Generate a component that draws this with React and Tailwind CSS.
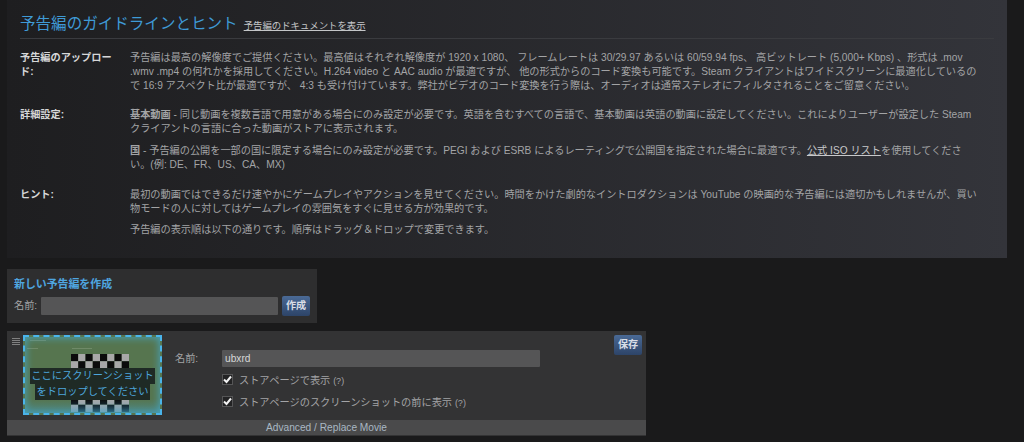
const rows = 8;
const cols = 8;

function Checker() {
  const cells = [];
  for (let r = 0; r < rows; r++) {
    for (let c = 0; c < cols; c++) {
      cells.push(
        <rect
          key={r + "-" + c}
          x={c * 7.3}
          y={r * 7.3}
          width="7.3"
          height="7.3"
          fill={(r + c) % 2 === 0 ? "#0b0b0b" : "#a8a8a8"}
        />
      );
    }
  }
  return (
    <svg width="58" height="58" viewBox="0 0 58.4 58.4" className="block">
      {cells}
    </svg>
  );
}

function Row({ label, children }) {
  return (
    <div className="flex">
      <div className="w-[110px] shrink-0 pr-[10px] font-bold text-[#d6d7d8]">{label}</div>
      <div className="flex-1 text-[#a3a4a6]">{children}</div>
    </div>
  );
}

function Button({ children }) {
  return (
    <button className="h-[20px] w-[28px] shrink-0 rounded-[2px] bg-gradient-to-b from-[#4a6a96] to-[#2d4468] text-center text-[10.1px] font-bold text-[#d8dde6]">
      {children}
    </button>
  );
}

function Check({ label }) {
  return (
    <label className="ml-[47px] flex items-center">
      <span className="-mt-[3px] flex h-[11px] w-[11px] shrink-0 items-center justify-center border border-[#555556] bg-[#232324]">
        <svg width="9" height="9" viewBox="0 0 9 9">
          <path d="M1 4.5 L3.5 7 L8 1.5" fill="none" stroke="#f2f2f2" strokeWidth="2" />
        </svg>
      </span>
      <span className="ml-[6px] text-[10.2px]">
        {label} <span className="text-[9px]">(?)</span>
      </span>
    </label>
  );
}

export default function App() {
  return (
    <div className="h-[442px] w-[1024px] overflow-hidden bg-[#1a1a1b] pl-[7px] text-[10.18px] leading-[14px] [font-family:'Liberation_Sans','Noto_Sans_CJK_JP',sans-serif]">
      {/* guidelines panel */}
      <div className="h-[258px] w-[1000px] bg-gradient-to-r from-[#1e1e20] to-[#33343a] px-[13px] pt-[15px]">
        <div className="flex h-[24px] items-baseline border-b border-[#3a3b3f]">
          <span className="text-[15.55px] leading-[18px] text-[#3f9ad6]">予告編のガイドラインとヒント</span>
          <span className="ml-[6px] text-[9.4px] text-[#c4c6c8] underline">予告編のドキュメントを表示</span>
        </div>
        <div className="mt-[12px]">
          <Row label="予告編のアップロード:">
            予告編は最高の解像度でご提供ください。最高値はそれぞれ解像度が 1920 x 1080、 フレームレートは 30/29.97 あるいは 60/59.94 fps、 高ビットレート (5,000+ Kbps) 、形式は .mov<br />.wmv .mp4 の何れかを採用してください。H.264 video と AAC audio が最適ですが、 他の形式からのコード変換も可能です。Steam クライアントはワイドスクリーンに最適化しているの<br />で 16:9 アスペクト比が最適ですが、 4:3 も受け付けています。弊社がビデオのコード変換を行う際は、オーディオは通常ステレオにフィルタされることをご留意ください。
          </Row>
        </div>
        <div className="mt-[15px]">
          <Row label="詳細設定:">
            <p>
              <b className="font-bold">基本動画</b> - 同じ動画を複数言語で用意がある場合にのみ設定が必要です。英語を含むすべての言語で、基本動画は英語の動画に設定してください。これによりユーザーが設定した Steam<br />クライアントの言語に合った動画がストアに表示されます。
            </p>
            <p className="mt-[8px]">
              <b className="font-bold">国</b> - 予告編の公開を一部の国に限定する場合にのみ設定が必要です。PEGI および ESRB によるレーティングで公開国を指定された場合に最適です。
              <span className="text-[#c8c9cb] underline">公式 ISO リスト</span>を使用してくださ<br />い。(例: DE、FR、US、CA、MX)
            </p>
          </Row>
        </div>
        <div className="mt-[16px]">
          <Row label="ヒント:">
            <p>
              最初の動画ではできるだけ速やかにゲームプレイやアクションを見せてください。時間をかけた劇的なイントロダクションは YouTube の映画的な予告編には適切かもしれませんが、買い<br />物モードの人に対してはゲームプレイの雰囲気をすぐに見せる方が効果的です。
            </p>
            <p className="mt-[7px]">予告編の表示順は以下の通りです。順序はドラッグ＆ドロップで変更できます。</p>
          </Row>
        </div>
      </div>

      {/* new trailer */}
      <div className="mt-[11px] h-[54px] w-[310px] bg-[#2e2e2f] px-[7px] pt-[8px]">
        <div className="text-[10.9px] font-bold text-[#4fa6e0]">新しい予告編を作成</div>
        <div className="mt-[5px] flex items-center text-[#a3a4a6]">
          <span className="w-[27px]">名前:</span>
          <div className="h-[18px] w-[239px] rounded-[1px] bg-[#555556]" />
          <div className="ml-[4px]">
            <Button>作成</Button>
          </div>
        </div>
      </div>

      {/* trailer row */}
      <div className="mt-[8px] h-[105px] w-[639px] bg-[#333334]">
        <div className="flex h-[89px]">
          <div className="flex w-[16px] shrink-0 flex-col gap-[1px] pl-[5px] pt-[7px]">
            <div className="h-[1px] w-[8px] bg-[#808080]" />
            <div className="h-[1px] w-[8px] bg-[#808080]" />
            <div className="h-[1px] w-[8px] bg-[#808080]" />
            <div className="h-[1px] w-[8px] bg-[#808080]" />
          </div>
          <div className="relative mt-[4px] h-[80px] w-[139px] shrink-0 border-2 border-dashed border-[#4ab4ea] bg-[#56754f]">
            <div className="flex justify-center pl-[14px] pt-[17px]">
              <Checker />
            </div>
            <div className="absolute left-[5px] top-[3px] h-[1px] w-[16px] bg-[#6f8a68]" />
            <div className="absolute left-[2px] top-[11px] h-[1px] w-[11px] bg-[#6f8a68]" />
            <div className="absolute left-[47px] top-[11px] h-[1px] w-[20px] bg-[#6f8a68]" />
            <div className="absolute inset-x-0 bottom-0 h-[14px] bg-gradient-to-b from-transparent to-[#3fa0d066]" />
            <div className="absolute inset-0 shadow-[inset_0_0_8px_#45a8c8]" />
            <div className="absolute left-0 right-0 top-[31px] whitespace-nowrap text-center text-[10.25px] leading-[16px] text-[#4da6dc]">
              <div>
                <span className="inline-block bg-[#1f2a25] px-[1px]">ここにスクリーンショット</span>
              </div>
              <div>
                <span className="inline-block bg-[#1f2a25] px-[1px]">をドロップしてください</span>
              </div>
            </div>
          </div>
          <div className="ml-[13px] flex-1 pt-[19px] text-[#a3a4a6]">
            <div className="flex items-center">
              <span className="w-[47px]">名前:</span>
              <div className="h-[17px] w-[318px] rounded-[1px] bg-[#555556] pl-[3px] leading-[17px] text-[#d6d7d8]">ubxrd</div>
            </div>
            <div className="mt-[7px] flex flex-col gap-[8px]">
              <Check label="ストアページで表示" />
              <Check label="ストアページのスクリーンショットの前に表示" />
            </div>
          </div>
          <div className="pr-[4px] pt-[4px]">
            <Button>保存</Button>
          </div>
        </div>
        <div className="h-[15px] bg-[#4a4a4b] text-center leading-[15px] text-[#a9b8c4]">Advanced / Replace Movie</div>
      </div>
    </div>
  );
}
